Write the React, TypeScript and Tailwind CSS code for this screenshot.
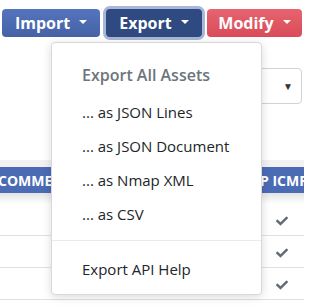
import { FaCheck } from "react-icons/fa";

const MENU_ITEMS = ["... as JSON Lines", "... as JSON Document", "... as Nmap XML", "... as CSV"];

function Caret() {
    return <span className="ml-[9px] inline-block w-0 h-0 border-l-[4px] border-r-[4px] border-t-[4px] border-l-transparent border-r-transparent border-t-white translate-y-[-1px]" />;
}

export default function App() {
    return (
        <div className="relative w-[316px] h-[307px] overflow-hidden bg-white font-['Open_Sans',sans-serif]">
            {/* Toolbar */}
            <div className="flex pt-[9px] pl-[2px]">
                <button className="w-[98px] h-[28px] flex items-center justify-center rounded-[4px] bg-gradient-to-b from-[#5474bd] to-[#4562a6] text-white font-bold text-[16px]">
                    Import
                    <Caret />
                </button>
                <button className="ml-[6px] w-[96px] h-[28px] flex items-center justify-center rounded-[4px] bg-[#2e4a80] ring-[3px] ring-[#a8b7d8] text-white font-bold text-[16px]">
                    Export
                    <Caret />
                </button>
                <button className="ml-[5px] w-[95px] h-[28px] flex items-center justify-center rounded-[4px] bg-gradient-to-b from-[#e6646f] to-[#d94b58] text-white font-bold text-[16px]">
                    Modify
                    <Caret />
                </button>
            </div>

            {/* Select behind menu */}
            <div className="flex justify-end pr-[14px] mt-[31px]">
                <div className="w-[220px] h-[36px] border border-[#ced4da] rounded-[4px] flex items-center justify-end pr-[8px] text-[10px] text-[#333]">
                    ▼
                </div>
            </div>

            {/* Table */}
            <div className="mt-[56px] w-[304px]">
                <div className="h-[7px] bg-[#f2f2f2]" />
                <div className="h-[26px] bg-[#4b6bb5] flex items-center text-white font-bold text-[14px] whitespace-nowrap overflow-hidden">
                    <span className="ml-[-2px]">COMMENT</span>
                    <span className="ml-auto mr-[-4px]">PORTS TCP ICMP</span>
                </div>
                <div className="h-[11px] bg-gradient-to-b from-[#e4e4e4] to-white" />
                {[0, 1, 2].map((i) => (
                    <div key={i} className="h-[32px] border-b border-[#dee2e6] flex items-center justify-end pr-[16px]">
                        <FaCheck className="text-[#5f6b78] w-[12px] h-[12px] mt-[2px]" />
                    </div>
                ))}
            </div>

            {/* Export dropdown menu */}
            <div className="absolute left-[51px] top-[42px] w-[211px] h-[253px] bg-white border border-[#d9d9d9] rounded-[4px] shadow-[0_2px_10px_rgba(0,0,0,0.15)] pt-[12px] px-[30px] text-[#212529]">
                <div className="h-[40px] flex items-center text-[16px] font-semibold text-[#6c757d]">Export All Assets</div>
                {MENU_ITEMS.map((item) => (
                    <div key={item} className="h-[34px] flex items-center text-[15px]">{item}</div>
                ))}
                <div className="mx-[-30px] mt-[9px] border-t border-[#e9ecef]" />
                <div className="mt-[11px] h-[34px] flex items-center text-[15px]">Export API Help</div>
            </div>
        </div>
    );
}
